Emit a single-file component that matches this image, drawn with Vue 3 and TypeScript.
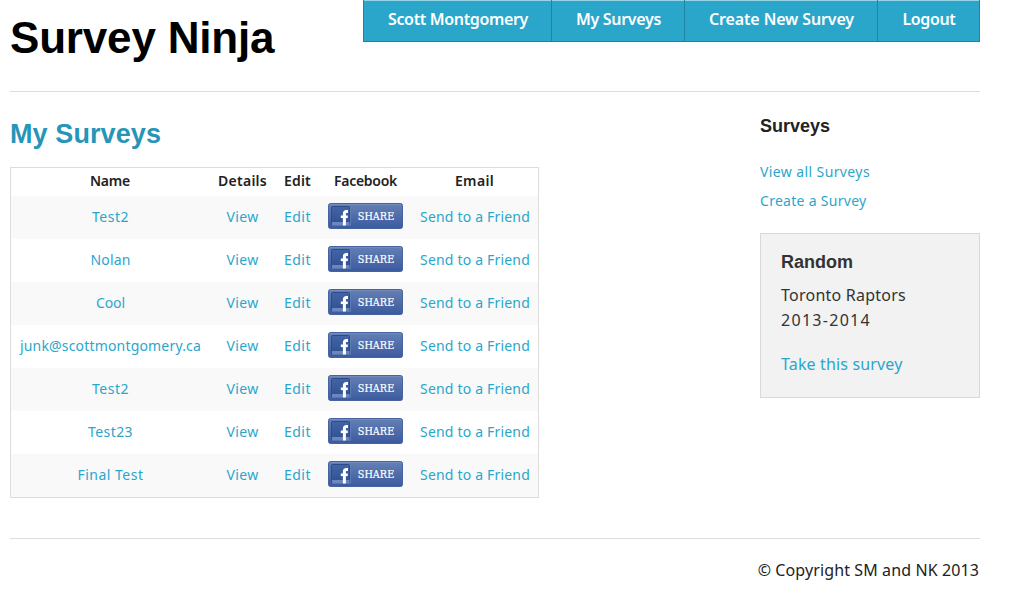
<script setup lang="ts">
interface Label {
  text: string
  gap: number
}

const nav: Label[] = [
  { text: 'Scott Montgomery', gap: -0.351 },
  { text: 'My Surveys', gap: -0.319 },
  { text: 'Create New Survey', gap: -0.132 },
  { text: 'Logout', gap: -0.367 },
]
const columns: Label[] = [
  { text: 'Name', gap: -0.23 },
  { text: 'Details', gap: 0.266 },
  { text: 'Edit', gap: 0.195 },
  { text: 'Facebook', gap: -0.276 },
  { text: 'Email', gap: 0.327 },
]
const surveys: Label[] = [
  { text: 'Test2', gap: 0.506 },
  { text: 'Nolan', gap: 0.154 },
  { text: 'Cool', gap: -0.1 },
  { text: 'junk@scottmontgomery.ca', gap: 0.174 },
  { text: 'Test2', gap: 0.506 },
  { text: 'Test23', gap: 0.421 },
  { text: 'Final Test', gap: 0.49 },
]
const spacing = (label: Label) => ({ letterSpacing: `${label.gap}px` })
</script>

<template>
  <div class="page">
    <header class="top">
      <h1>Survey Ninja</h1>
      <nav class="nav">
        <a v-for="item in nav" :key="item.text" :style="spacing(item)">{{ item.text }}</a>
      </nav>
    </header>

    <main class="body">
      <section class="content">
        <h2>My Surveys</h2>
        <table class="surveys">
          <colgroup>
            <col class="c-name" /><col class="c-details" /><col class="c-edit" /><col class="c-share" /><col class="c-email" />
          </colgroup>
          <thead>
            <tr>
              <th v-for="col in columns" :key="col.text"><span :style="spacing(col)">{{ col.text }}</span></th>
            </tr>
          </thead>
          <tbody>
            <tr v-for="(survey, i) in surveys" :key="i">
              <td class="nudge"><a :style="spacing(survey)">{{ survey.text }}</a></td>
              <td class="nudge"><a class="view">View</a></td>
              <td><a class="edit">Edit</a></td>
              <td>
                <svg class="share" width="75" height="26" viewBox="0 0 75 26">
                  <defs>
                    <linearGradient id="btn" x1="0" y1="0" x2="0" y2="1">
                      <stop offset="0" stop-color="#6580b5" />
                      <stop offset="1" stop-color="#3b5a9f" />
                    </linearGradient>
                    <linearGradient id="tile" x1="0" y1="0" x2="0" y2="1">
                      <stop offset="0" stop-color="#4265a8" />
                      <stop offset="1" stop-color="#30508f" />
                    </linearGradient>
                  </defs>
                  <rect x="0.5" y="0.5" width="74" height="25" rx="2" fill="url(#btn)" stroke="#46639f" />
                  <path d="M2 1.5H73" stroke="#718bbd" />
                  <rect x="3.5" y="3.5" width="18" height="18.5" rx="1" fill="url(#tile)" stroke="#2d4b87" />
                  <rect x="4" y="19" width="17.5" height="3" fill="#6c86c1" />
                  <path d="M22.5 4V22.5H4" fill="none" stroke="#6781b7" stroke-opacity=".7" />
                  <path d="M20 8.4H18.4Q16.4 8.4 16.4 10.4V22.6" fill="none" stroke="#fff" stroke-width="3" />
                  <path d="M12.8 13.8H19.8" fill="none" stroke="#fff" stroke-width="2.6" />
                  <text x="29.8" y="16.6" textLength="36.4" lengthAdjust="spacingAndGlyphs">SHARE</text>
                </svg>
              </td>
              <td class="nudge"><a class="send">Send to a Friend</a></td>
            </tr>
          </tbody>
        </table>
      </section>

      <aside class="side">
        <h3>Surveys</h3>
        <ul>
          <li><a class="all">View all Surveys</a></li>
          <li><a class="create">Create a Survey</a></li>
        </ul>
        <div class="panel">
          <h3>Random</h3>
          <p><span class="team">Toronto Raptors</span><br /><span class="season">2013-2014</span></p>
          <a class="take">Take this survey</a>
        </div>
      </aside>
    </main>

    <footer class="foot">© Copyright SM and NK 2013</footer>
  </div>
</template>

<style>
html,
body {
  margin: 0;
  background: #fff;
  overflow: hidden;
}
</style>

<style scoped>
.page {
  width: 970px;
  margin-left: 10px;
  font-family: "Noto Sans", sans-serif;
  font-size: 16px;
  color: #222;
}
h1, h2, h3, p, ul {
  margin: 0;
  padding: 0;
}
h1, h2, h3 {
  font-family: "Liberation Sans", Arial, sans-serif;
  font-weight: 700;
}
a {
  color: #2ba6cb;
}
.top {
  display: flex;
  justify-content: space-between;
  align-items: flex-start;
  height: 91px;
  border-bottom: 1px solid #ddd;
}
h1 {
  font-size: 44px;
  line-height: 48px;
  letter-spacing: -0.18px;
  padding-top: 14px;
  color: #000;
}
.nav {
  display: grid;
  grid-template-columns: 187px 133px 193px 102px;
  height: 41px;
  background: #2ba6cb;
  border: 1px solid #1e85a3;
  border-top: 0;
  box-shadow: inset 0 1px 0 rgba(255, 255, 255, 0.5);
}
.nav a {
  text-align: center;
  color: #fff;
  font-weight: 600;
  line-height: 38px;
  border-left: 1px solid #1e85a3;
  padding-left: 1px;
  white-space: nowrap;
}
.nav a:first-child {
  border-left: 0;
}
.body {
  display: flex;
  justify-content: space-between;
  height: 446px;
  border-bottom: 1px solid #ddd;
}
h2 {
  font-size: 27px;
  line-height: 38px;
  letter-spacing: 0.1px;
  padding: 23px 0 14px;
  color: #2795b6;
}
.surveys {
  table-layout: fixed;
  width: 529px;
  border: 1px solid #ddd;
  border-spacing: 0;
  font-size: 14px;
  text-align: center;
}
.c-name { width: 198px; }
.c-details { width: 66px; }
.c-edit { width: 45px; }
.c-share { width: 91px; }
.c-email { width: 127px; }
.surveys th {
  height: 28px;
  padding: 0 0 2px;
  box-sizing: border-box;
  line-height: 26px;
  font-weight: 600;
}
.surveys th:nth-child(2) {
  padding-left: 1px;
}
.surveys td {
  height: 43px;
  padding: 0;
  line-height: 41px;
  box-sizing: border-box;
  vertical-align: top;
  white-space: nowrap;
}
.surveys td.nudge {
  padding-left: 1px;
}
.surveys tbody tr:nth-child(odd) {
  background: #f9f9f9;
}
.share {
  display: block;
  margin: 7px auto 0;
}
.share text {
  font: 10.5px "DejaVu Serif", serif;
  fill: #fff;
  stroke: #fff;
  stroke-width: 0.2px;
}
.view { letter-spacing: 0.342px; }
.edit { letter-spacing: 0.485px; }
.send { letter-spacing: 0.19px; }
.all { letter-spacing: 0.395px; }
.create { letter-spacing: 0.29px; }
.team { letter-spacing: 0.238px; }
.season { letter-spacing: 1.292px; }
.take { letter-spacing: 0.15px; }
.side {
  width: 220px;
}
.side h3 {
  font-size: 18px;
  line-height: 24px;
  padding-top: 22px;
}
.side ul {
  list-style: none;
  padding: 19px 0 18px;
  font-size: 14px;
  line-height: 29px;
}
.panel {
  box-sizing: border-box;
  height: 165px;
  border: 1px solid #d9d9d9;
  background: #f2f2f2;
  padding: 16px 20px 0;
  color: #333;
}
.side .panel h3 {
  padding: 0;
}
.panel p {
  line-height: 25px;
  padding: 9px 0 19px;
}
.panel a {
  line-height: 25px;
}
.foot {
  text-align: right;
  letter-spacing: 0.11px;
  line-height: 25px;
  padding: 19px 1px 0 0;
}
</style>
